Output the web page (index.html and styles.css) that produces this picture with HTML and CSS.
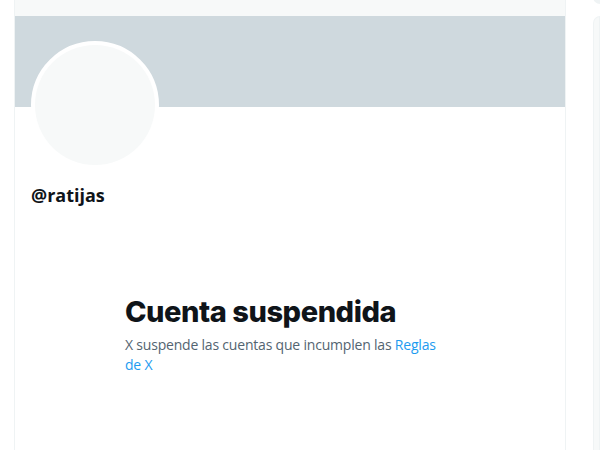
FILE: index.html
```html
<!DOCTYPE html>
<html>
<head>
  <title>@ratijas / X</title>
  <link rel="stylesheet" href="styles.css">
</head>
<body>

  <div class="page">

    <div class="side-left"></div>

    <div class="main-column">

      <div class="top-bar">
        <span class="post-count">0 posts</span>
      </div>

      <div class="banner"></div>

      <div class="profile">
        <div class="avatar"><div class="avatar-inner"></div></div>
        <div class="handle">@ratijas</div>
      </div>

      <div class="empty-state">
        <div class="empty-box">
          <h1>Cuenta suspendida</h1>
          <p>X suspende las cuentas que incumplen las <a href="#">Reglas de X</a></p>
        </div>
      </div>

    </div>

    <div class="side-right">
      <div class="search-pill"></div>
      <div class="side-panel"></div>
    </div>

  </div>

</body>
</html>
```

FILE: styles.css
```css
body{

    margin: 0;
    background: #ffffff;
    font-family: "Open Sans", "Liberation Sans", sans-serif;
    color: #0f1419;
}

.page{

    display: flex;
    height: 450px;
    overflow: hidden;
}

.side-left{

    width: 14px;
    flex-shrink: 0;
}

.main-column{

    width: 550px;
    flex-shrink: 0;
    border-left: 1px solid #eff3f4;
    border-right: 1px solid #eff3f4;
}

.top-bar{

    height: 16px;
    background: #f7f9f9;
    overflow: hidden;
    padding-left: 40px;
}

.post-count{

    display: block;
    margin-top: -16px;
    font-size: 13px;
    line-height: 16px;
    color: #536471;
}

.banner{

    height: 91px;
    background: #cfd9de;
}

.profile{

    padding: 0 16px;
}

.avatar{

    width: 120px;
    height: 120px;
    margin-top: -66px;
    border: 4px solid #ffffff;
    border-radius: 50%;
    background: #ffffff;
}

.avatar-inner{

    width: 100%;
    height: 100%;
    border-radius: 50%;
    background: #f7f9f9;
}

.handle{

    margin-top: 16px;
    font-size: 18px;
    line-height: 20px;
    font-weight: 700;
}

.empty-state{

    display: flex;
    padding-left: 110px;
    padding-top: 89px;
}

.empty-box{

    width: 322px;
}

.empty-box h1{

    margin: 0 0 5px 0;
    font-family: "Inter", "Liberation Sans", sans-serif;
    font-size: 29px;
    line-height: 36px;
    font-weight: 800;
    letter-spacing: -0.45px;
    white-space: nowrap;
}

.empty-box p{

    margin: 0;
    font-size: 14px;
    line-height: 20px;
    letter-spacing: -0.2px;
    color: #536471;
}

.empty-box a{

    color: #1d9bf0;
    text-decoration: none;
}

.side-right{

    flex: 1;
    padding-left: 27px;
}

.search-pill{

    height: 8px;
    margin-top: -4px;
    border-radius: 0 0 0 12px;
    background: #eff3f4;
}

.side-panel{

    height: 440px;
    margin-top: 12px;
    border-radius: 16px 0 0 0;
    background: #f7f9f9;
    border: 1px solid #eff3f4;
}
```
